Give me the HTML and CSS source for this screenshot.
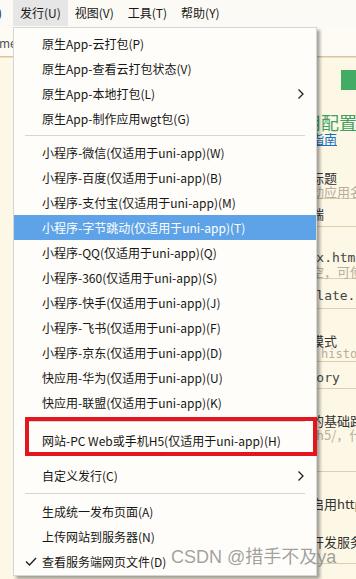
FILE: index.html
```html
<!doctype html>
<html lang="zh-CN">
  <head>
    <meta charset="utf-8" />
    <title>发行菜单</title>
    <link rel="stylesheet" href="styles.css">
  </head>
  <body>
    <div class="app">
      <!-- top menu bar -->
      <div class="menubar">
        <span class="menubar_cut">)</span>
        <span class="menubar_item active">发行(U)</span>
        <span class="menubar_item">视图(V)</span>
        <span class="menubar_item">工具(T)</span>
        <span class="menubar_item">帮助(Y)</span>
      </div>
      <div class="tabs"><span class="tab_text">me</span></div>

      <!-- manifest editor behind the menu -->
      <div class="editor">
        <div class="ed_btn"></div>
        <div class="ed_title">应用配置</div>
        <div class="ed_link">使用指南</div>
        <div class="ed_label">应用标题</div>
        <div class="ed_hint ed_border">请移动应用名称</div>
        <div class="ed_value ed_border">移动端</div>
        <div class="ed_mono first">index.html</div>
        <div class="ed_hint ed_border">如为空，可使用默认值</div>
        <div class="ed_mono ed_border second">template.h5.html</div>
        <div class="ed_label">路由模式</div>
        <div class="ed_hint mono ed_border">hash history</div>
        <div class="ed_mono ed_border third">history</div>
        <div class="ed_label">运行的基础路径</div>
        <div class="ed_hint">如：/h5/，什么都不填</div>
        <div class="ed_line ed_border"></div>
        <div class="ed_label">是否启用https</div>
        <div class="ed_label ed_border last">启动开发服务器</div>
      </div>

      <!-- the open dropdown -->
      <ul class="dropdown">
        <li class="item">原生App-云打包(P)</li>
        <li class="item">原生App-查看云打包状态(V)</li>
        <li class="item"><span>原生App-本地打包(L)</span>
          <svg class="arrow" width="6" height="10" viewBox="0 0 6 10"><polyline points="0.5,0.5 5,5 0.5,9.5" /></svg>
        </li>
        <li class="item">原生App-制作应用wgt包(G)</li>
        <li class="sep"></li>
        <li class="item">小程序-微信(仅适用于uni-app)(W)</li>
        <li class="item">小程序-百度(仅适用于uni-app)(B)</li>
        <li class="item">小程序-支付宝(仅适用于uni-app)(M)</li>
        <li class="item hover">小程序-字节跳动(仅适用于uni-app)(T)</li>
        <li class="item">小程序-QQ(仅适用于uni-app)(Q)</li>
        <li class="item">小程序-360(仅适用于uni-app)(S)</li>
        <li class="item">小程序-快手(仅适用于uni-app)(J)</li>
        <li class="item">小程序-飞书(仅适用于uni-app)(F)</li>
        <li class="item">小程序-京东(仅适用于uni-app)(D)</li>
        <li class="item">快应用-华为(仅适用于uni-app)(U)</li>
        <li class="item">快应用-联盟(仅适用于uni-app)(K)</li>
        <li class="sep wide"></li>
        <li class="item">网站-PC Web或手机H5(仅适用于uni-app)(H)</li>
        <li class="gap"></li>
        <li class="item"><span>自定义发行(C)</span>
          <svg class="arrow" width="6" height="10" viewBox="0 0 6 10"><polyline points="0.5,0.5 5,5 0.5,9.5" /></svg>
        </li>
        <li class="sep mid"></li>
        <li class="item">生成统一发布页面(A)</li>
        <li class="item">上传网站到服务器(N)</li>
        <li class="item checked">
          <svg class="check" width="12" height="10" viewBox="0 0 12 10"><polyline points="1,4.5 4.5,8 11,1" /></svg>
          <span>查看服务端网页文件(D)</span>
        </li>
      </ul>

      <!-- red annotation box -->
      <div class="mark_box"></div>
      <div class="watermark">CSDN @措手不及ya</div>
    </div>
  </body>
</html>
```

FILE: styles.css
```css
/* Set CSS for whole page */
*{
  box-sizing: border-box;
}
body{
  margin: 0;
  font-family: "Noto Sans CJK SC", "Noto Sans", sans-serif;
  font-size: 12px;
  color: #161616;
}
.app{
  position: relative;
  width: 356px;
  height: 579px;
  overflow: hidden;
  background: #fcf6e5;
}
/* Set CSS for the menu bar */
.menubar{
  display: flex;
  height: 27px;
  background: #fcfaf4;
}
.menubar_cut{
  width: 13px;
  line-height: 26px;
  text-indent: -2px;
}
.menubar_item{
  height: 26px;
  line-height: 26px;
  padding: 0 7px;
}
.menubar_item.active{
  background: #e6e6e6;
}
/* Set CSS for the tab strip */
.tabs{
  height: 30px;
  background: #fdfbf4;
  border-bottom: 1px solid #d6c7a0;
}
.tab_text{
  display: block;
  padding-top: 8px;
  line-height: 16px;
  font-size: 12px;
  color: #555;
  margin-left: -1px;
}
/* Set CSS for the editor */
.editor{
  height: 522px;
  padding-left: 285px;
  font-size: 13px;
  background: #fdf7e6;
  border-top: 1px solid #ebdfbf;
  white-space: nowrap;
  color: #333;
}
.ed_border{
  border-bottom: 1px solid #dccfae;
}
.ed_btn{
  margin-top: 12px;
  margin-left: 56px;
  width: 60px;
  height: 20px;
  background: #43ab66;
}
.ed_title{
  margin-top: 23px;
  font-size: 18px;
  line-height: 19px;
  color: #3fa15f;
}
.ed_link{
  line-height: 14px;
  color: #1c70c4;
  text-decoration: underline;
}
.ed_label{
  margin-top: 25px;
  line-height: 14px;
}
.ed_hint{
  line-height: 13px;
  color: #b7ae9c;
}
.ed_hint.mono{
  font-family: "DejaVu Sans Mono", monospace;
  font-size: 12px;
}
.ed_value{
  margin-top: 8px;
  line-height: 14px;
  padding-bottom: 5px;
}
.ed_mono{
  font-family: "DejaVu Sans Mono", monospace;
  line-height: 14px;
  color: #444;
}
.ed_mono.first{
  margin-top: 24px;
}
.ed_mono.second{
  margin-top: 10px;
  padding-bottom: 5px;
}
.ed_mono.third{
  margin-top: 9px;
  padding-bottom: 3px;
}
.ed_line{
  height: 31px;
}
.ed_label.last{
  margin-top: 24px;
  padding-bottom: 14px;
}
/* Set CSS for the dropdown */
.dropdown{
  position: absolute;
  left: 13px;
  top: 27px;
  width: 304px;
  margin: 0;
  padding: 3px 0 1px;
  list-style: none;
  background: #fffdf9;
  border: 1px solid #d6d6d6;
  box-shadow: 3px 3px 3px rgba(0, 0, 0, 0.35);
}
.item{
  display: flex;
  justify-content: space-between;
  align-items: center;
  height: 25px;
  line-height: 25px;
  padding: 0 12px 0 28px;
  white-space: nowrap;
}
.item.hover{
  background: #5ea3e7;
  color: #fff;
}
.item.checked{
  justify-content: flex-start;
  padding-left: 11px;
}
.arrow{
  fill: none;
  stroke: #222;
  stroke-width: 1.3;
}
.check{
  margin-right: 5px;
  fill: none;
  stroke: #222;
  stroke-width: 1.4;
}
.sep{
  height: 1px;
  margin: 4px 11px;
  background: #d5d5d5;
}
.sep.wide{
  margin: 6px 11px;
}
.sep.mid{
  margin: 5px 11px;
}
.gap{
  height: 10px;
}
/* Set CSS for the annotation */
.mark_box{
  position: absolute;
  left: 25px;
  top: 417px;
  width: 292px;
  height: 39px;
  border: 4px solid #e3161f;
}
.watermark{
  position: absolute;
  left: 171px;
  top: 545px;
  font-family: "Liberation Sans", "Noto Sans CJK SC", sans-serif;
  font-size: 18px;
  line-height: 24px;
  color: rgba(120, 120, 120, 0.7);
}
```
